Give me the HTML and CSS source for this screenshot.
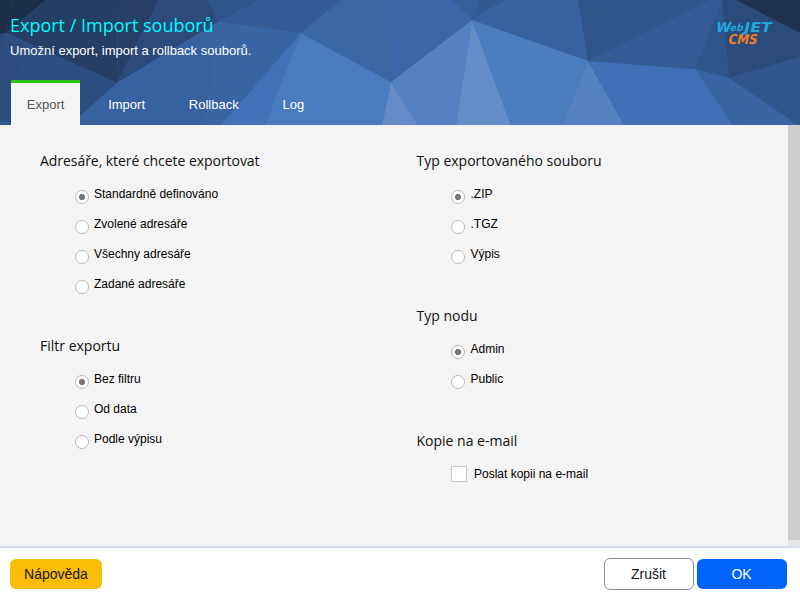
FILE: index.html
```html
<!DOCTYPE html>
<html lang="cs">
<head>
<meta charset="utf-8">
<title>Export / Import souborů</title>
<link rel="stylesheet" href="styles.css">
</head>
<body>
<header class="header">
  <svg class="pattern" viewBox="0 0 800 125" aria-hidden="true">
    <rect width="800" height="125" fill="#3a64a2"/>
    <path fill="#1b2d47" d="M0 0H13L6 33L0 34Z"/>
    <path fill="#1b2d47" d="M13 0H46L6 33Z"/>
    <path fill="#253e64" d="M46 0H118L117 83L6 33Z"/>
    <path fill="#273f67" d="M118 0H159L117 83Z"/>
    <path fill="#2c4b7b" d="M159 0H208L218 22L117 83Z"/>
    <path fill="#30558a" d="M208 0H261L218 22Z"/>
    <path fill="#345b94" d="M261 0H341L301 33L218 22Z"/>
    <path fill="#2b4a78" d="M0 34L6 33L0 75Z"/>
    <path fill="#2d4e80" d="M6 33L117 83L70 125H45Z"/>
    <path fill="#2b4c7d" d="M6 33L45 125H0V75Z"/>
    <path fill="#31588f" d="M0 120L11 122V125H0Z"/>
    <path fill="#38629f" d="M117 83L218 22L205 125H70Z"/>
    <path fill="#3a65a4" d="M218 22L301 33L221 125H205Z"/>
    <path fill="#4271b9" d="M301 33L265 125H221Z"/>
    <path fill="#4a7bc0" d="M301 33L391 82L382 125H265Z"/>
    <path fill="#3b67a5" d="M341 0H398L391 82L301 33Z"/>
    <path fill="#3b67aa" d="M398 0H453L472 20L391 82Z"/>
    <path fill="#648bc6" d="M391 82L418 125H382Z"/>
    <path fill="#5682c4" d="M391 82L472 20L456 125H418Z"/>
    <path fill="#648cc6" d="M472 20L511 125H456Z"/>
    <path fill="#355f99" d="M453 0H480L472 20Z"/>
    <path fill="#335990" d="M480 0H505L472 20Z"/>
    <path fill="#38629f" d="M505 0H578L588 61L472 20Z"/>
    <path fill="#4d7dc1" d="M472 20L588 61L562 125H511Z"/>
    <path fill="#5682c4" d="M588 61L624 125H562Z"/>
    <path fill="#4170b8" d="M588 61L695 69L733 125H624Z"/>
    <path fill="#30558a" d="M578 0H710L588 61Z"/>
    <path fill="#345b94" d="M710 0H722L695 69L588 61Z"/>
    <path fill="#30558a" d="M722 0L729 78L695 69Z"/>
    <path fill="#3864a3" d="M695 69L729 78L740 125H733Z"/>
    <path fill="#3a64a3" d="M729 78L798 125H740Z"/>
    <path fill="#2b4b7a" d="M722 0H736L800 33V57L729 78Z"/>
    <path fill="#1e3352" d="M736 0H800V33Z"/>
    <path fill="#31568b" d="M729 78L800 57V125H798Z"/>
  </svg>
  <h1 class="title">Export / Import souborů</h1>
  <p class="subtitle">Umožní export, import a rollback souborů.</p>
  <svg class="logo" viewBox="0 0 60 28" role="img" aria-label="WebJET CMS">
    <g transform="skewX(-12)">
      <text class="logo-web" x="4" y="12.500" textLength="15" lengthAdjust="spacingAndGlyphs">W</text>
      <text class="logo-web logo-small" x="18.500" y="12.500" textLength="13" lengthAdjust="spacingAndGlyphs">eb</text>
      <text class="logo-web" x="32" y="12.500" textLength="27.500" lengthAdjust="spacingAndGlyphs">JET</text>
      <text class="logo-cms" x="19" y="25.300" textLength="29" lengthAdjust="spacingAndGlyphs">CMS</text>
    </g>
  </svg>
  <nav class="tabs">
    <a class="tab active">Export</a>
    <a class="tab">Import</a>
    <a class="tab">Rollback</a>
    <a class="tab">Log</a>
  </nav>
</header>
<main class="content">
  <div class="column">
    <section class="group first-left">
      <h2>Adresáře, které chcete exportovat</h2>
      <label class="option"><span class="radio checked"></span>Standardně definováno</label>
      <label class="option"><span class="radio"></span>Zvolené adresáře</label>
      <label class="option"><span class="radio"></span>Všechny adresáře</label>
      <label class="option"><span class="radio"></span>Zadané adresáře</label>
    </section>
    <section class="group">
      <h2>Filtr exportu</h2>
      <label class="option"><span class="radio checked"></span>Bez filtru</label>
      <label class="option"><span class="radio"></span>Od data</label>
      <label class="option"><span class="radio"></span>Podle výpisu</label>
    </section>
  </div>
  <div class="column right">
    <section class="group">
      <h2>Typ exportovaného souboru</h2>
      <label class="option"><span class="radio checked"></span>.ZIP</label>
      <label class="option"><span class="radio"></span>.TGZ</label>
      <label class="option"><span class="radio"></span>Výpis</label>
    </section>
    <section class="group">
      <h2>Typ nodu</h2>
      <label class="option"><span class="radio checked"></span>Admin</label>
      <label class="option"><span class="radio"></span>Public</label>
    </section>
    <section class="group">
      <h2>Kopie na e-mail</h2>
      <label class="option"><span class="checkbox"></span>Poslat kopii na e-mail</label>
    </section>
  </div>
  <div class="scrollbar"><div class="thumb"></div></div>
</main>
<footer class="footer">
  <button class="button help">Nápověda</button>
  <button class="button cancel">Zrušit</button>
  <button class="button ok">OK</button>
</footer>
</body>
</html>
```
FILE: styles.css
```css
* { box-sizing: border-box; }
body {
  margin: 0;
  width: 800px;
  height: 600px;
  overflow: hidden;
  display: flex;
  flex-direction: column;
  font-family: "Liberation Sans", Arial, sans-serif;
  background: #fff;
  color: #000;
}
.header {
  position: relative;
  height: 125px;
  flex: none;
  padding: 13px 10px 0;
  display: flex;
  flex-direction: column;
  color: #fff;
}
.pattern {
  position: absolute;
  inset: 0;
  width: 800px;
  height: 125px;
  shape-rendering: geometricPrecision;
}
.title, .subtitle, .tabs { position: relative; }
.title {
  margin: 0;
  font: 400 18px/24px "Open Sans", sans-serif;
  color: #00fbff;
  align-self: flex-start;
}
.subtitle { margin: 5px 0 0; font-size: 13px; line-height: 18px; }
.logo { position: absolute; left: 714px; top: 19px; width: 60px; height: 28px; }
.logo text { font-family: "DejaVu Sans", sans-serif; font-weight: 700; font-size: 13.500px; }
.logo .logo-web { fill: #21a9e1; }
.logo .logo-small { font-size: 10px; }
.logo .logo-cms { fill: #f07d22; }
.tabs { display: flex; margin-top: auto; padding-left: 1px; gap: 12px; }
.tab {
  height: 45px;
  padding: 0 16px 0 15.800px;
  border-top: 3px solid transparent;
  font-size: 13px;
  line-height: 43px;
}
.tab.active { background: #f4f4f4; border-top-color: #2cc30f; color: #555; }
.content {
  height: 421px;
  flex: none;
  display: flex;
  background: #f4f4f4;
}
.column { width: 376.500px; padding: 25px 0 0 40px; }
.right { flex: 1; }
.group { margin-bottom: 34px; }
h2 { margin: 0 0 10px; font: 400 14px/21px "Open Sans", sans-serif; color: #111; }
.first-left h2 { letter-spacing: -0.05px; }
.option { display: flex; height: 30px; padding: 5px 0 0 35px; font-size: 12px; line-height: 16px; }
.right .option { padding-left: 34.500px; }
.radio {
  width: 14px;
  height: 14px;
  margin: 4px 5px 0 0;
  border: 1px solid #b9b9b9;
  border-radius: 50%;
  background: #fff;
}
.right .radio { margin-right: 5.500px; }
.radio.checked { background: radial-gradient(circle, #777 0 2.800px, #fff 3.400px); }
.checkbox { width: 16px; height: 16px; margin-right: 7px; border: 1px solid #c8c8c8; background: #fff; }
.scrollbar { width: 12px; background: #e6e6e6; }
.thumb { height: 415px; background: #cdcdcd; }
.footer {
  height: 54px;
  display: flex;
  align-items: center;
  gap: 3px;
  padding: 0 13.500px 0 10px;
  border-top: 2px solid #d2dded;
  background: #fff;
}
.button {
  height: 30px;
  width: 90px;
  padding: 0;
  border: 0;
  border-radius: 6px;
  font: 14px/20px "Liberation Sans", Arial, sans-serif;
}
.help { width: 92px; margin-right: auto; background: #fbbc05; color: #13151b; }
.cancel { height: 32px; border: 1px solid #868ea9; background: #fff; color: #13151b; }
.ok { background: #0063fb; color: #fff; }
```
